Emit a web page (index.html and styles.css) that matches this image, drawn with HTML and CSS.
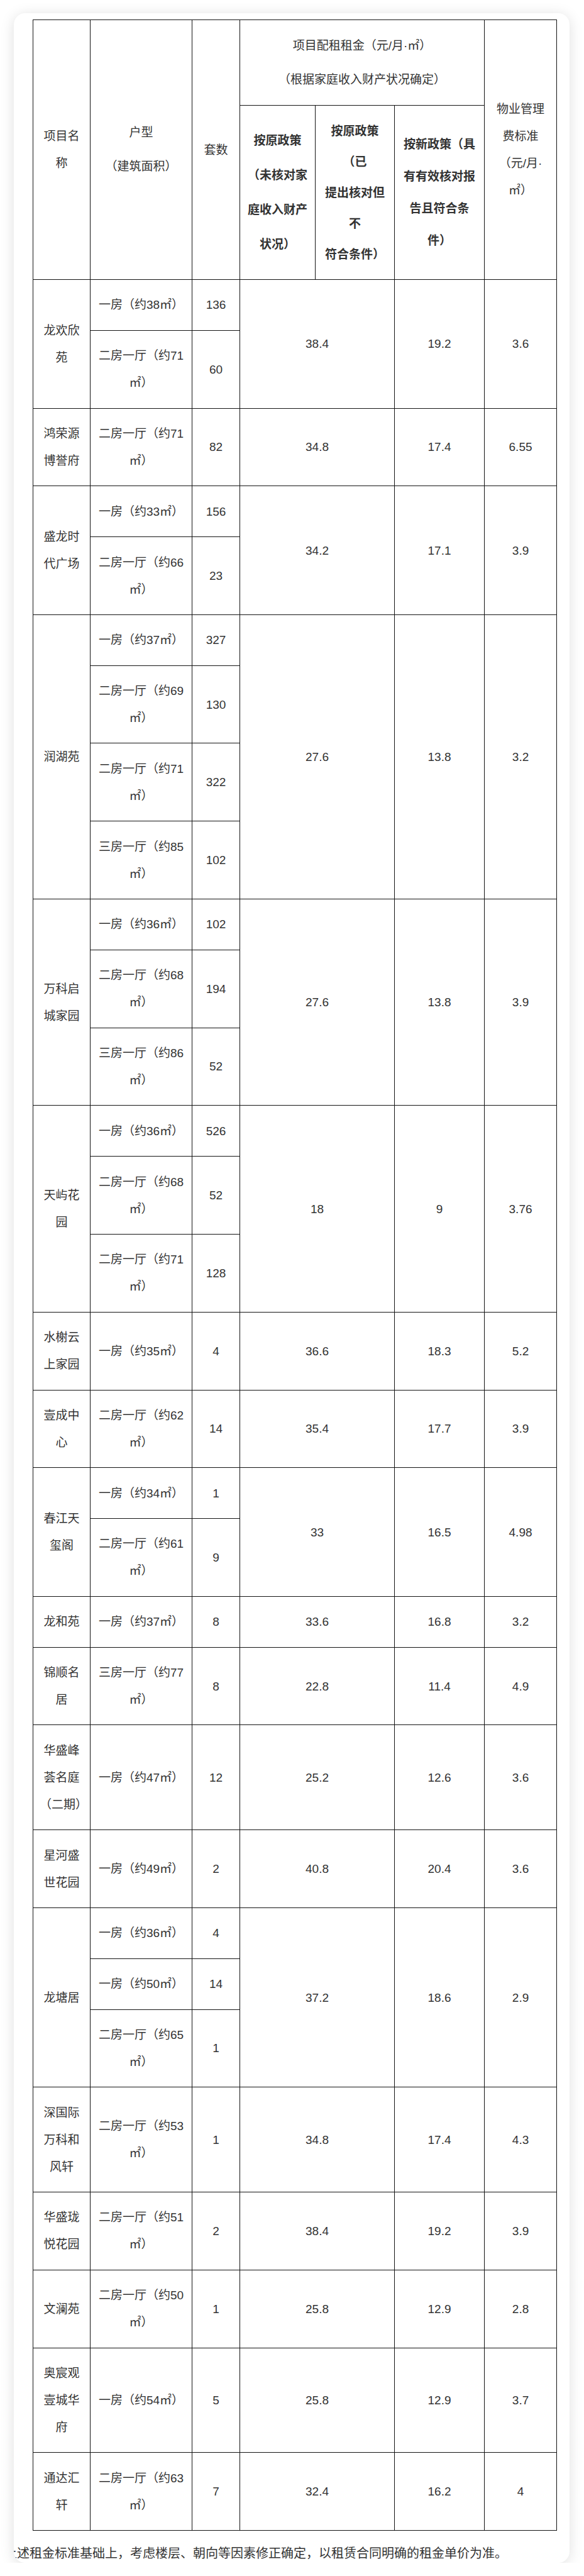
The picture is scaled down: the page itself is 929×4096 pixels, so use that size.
FILE: index.html
```html
<!DOCTYPE html>
<html lang="zh-CN">
<head>
<meta charset="utf-8">
<title>项目配租租金</title>
<link rel="stylesheet" href="styles.css">
</head>
<body>
<div class="card">
<table class="rent">
<colgroup>
<col class="c1"><col class="c2"><col class="c3"><col class="c4"><col class="c5"><col class="c6"><col class="c7">
</colgroup>
<thead>
<tr class="hr1">
<th rowspan="2" class="hname">项目名称</th>
<th rowspan="2" class="htype"><div>户型</div><div>（建筑面积）</div></th>
<th rowspan="2">套数</th>
<th colspan="3" class="hrent"><div>项目配租租金（元/月·㎡）</div><div>（根据家庭收入财产状况确定）</div></th>
<th rowspan="2" class="hfee">物业管理费标准（元/月·㎡）</th>
</tr>
<tr class="hr2">
<th class="pol p4">按原政策（未核对家庭收入财产状况）</th>
<th class="pol p5">按原政策（已<br>提出核对但不<br>符合条件）</th>
<th class="pol p6">按新政策（具有有效核对报告且符合条件）</th>
</tr>
</thead>
<tbody>
<tr><td rowspan="2">龙欢欣苑</td><td>一房（约38㎡）</td><td>136</td><td rowspan="2" colspan="2">38.4</td><td rowspan="2">19.2</td><td rowspan="2">3.6</td></tr>
<tr><td>二房一厅（约71㎡）</td><td>60</td></tr>

<tr><td>鸿荣源博誉府</td><td>二房一厅（约71㎡）</td><td>82</td><td colspan="2">34.8</td><td>17.4</td><td>6.55</td></tr>

<tr><td rowspan="2">盛龙时代广场</td><td>一房（约33㎡）</td><td>156</td><td rowspan="2" colspan="2">34.2</td><td rowspan="2">17.1</td><td rowspan="2">3.9</td></tr>
<tr><td>二房一厅（约66㎡）</td><td>23</td></tr>

<tr><td rowspan="4">润湖苑</td><td>一房（约37㎡）</td><td>327</td><td rowspan="4" colspan="2">27.6</td><td rowspan="4">13.8</td><td rowspan="4">3.2</td></tr>
<tr><td>二房一厅（约69㎡）</td><td>130</td></tr>
<tr><td>二房一厅（约71㎡）</td><td>322</td></tr>
<tr><td>三房一厅（约85㎡）</td><td>102</td></tr>

<tr><td rowspan="3">万科启城家园</td><td>一房（约36㎡）</td><td>102</td><td rowspan="3" colspan="2">27.6</td><td rowspan="3">13.8</td><td rowspan="3">3.9</td></tr>
<tr><td>二房一厅（约68㎡）</td><td>194</td></tr>
<tr><td>三房一厅（约86㎡）</td><td>52</td></tr>

<tr><td rowspan="3">天屿花园</td><td>一房（约36㎡）</td><td>526</td><td rowspan="3" colspan="2">18</td><td rowspan="3">9</td><td rowspan="3">3.76</td></tr>
<tr><td>二房一厅（约68㎡）</td><td>52</td></tr>
<tr><td>二房一厅（约71㎡）</td><td>128</td></tr>

<tr><td>水榭云上家园</td><td>一房（约35㎡）</td><td>4</td><td colspan="2">36.6</td><td>18.3</td><td>5.2</td></tr>

<tr><td>壹成中心</td><td>二房一厅（约62㎡）</td><td>14</td><td colspan="2">35.4</td><td>17.7</td><td>3.9</td></tr>

<tr><td rowspan="2">春江天玺阁</td><td>一房（约34㎡）</td><td>1</td><td rowspan="2" colspan="2">33</td><td rowspan="2">16.5</td><td rowspan="2">4.98</td></tr>
<tr><td>二房一厅（约61㎡）</td><td>9</td></tr>

<tr><td>龙和苑</td><td>一房（约37㎡）</td><td>8</td><td colspan="2">33.6</td><td>16.8</td><td>3.2</td></tr>

<tr><td>锦顺名居</td><td>三房一厅（约77㎡）</td><td>8</td><td colspan="2">22.8</td><td>11.4</td><td>4.9</td></tr>

<tr><td>华盛峰荟名庭<span class="nw">（二期）</span></td><td>一房（约47㎡）</td><td>12</td><td colspan="2">25.2</td><td>12.6</td><td>3.6</td></tr>

<tr><td>星河盛世花园</td><td>一房（约49㎡）</td><td>2</td><td colspan="2">40.8</td><td>20.4</td><td>3.6</td></tr>

<tr><td rowspan="3">龙塘居</td><td>一房（约36㎡）</td><td>4</td><td rowspan="3" colspan="2">37.2</td><td rowspan="3">18.6</td><td rowspan="3">2.9</td></tr>
<tr><td>一房（约50㎡）</td><td>14</td></tr>
<tr><td>二房一厅（约65㎡）</td><td>1</td></tr>

<tr><td>深国际万科和风轩</td><td>二房一厅（约53㎡）</td><td>1</td><td colspan="2">34.8</td><td>17.4</td><td>4.3</td></tr>

<tr><td>华盛珑悦花园</td><td>二房一厅（约51㎡）</td><td>2</td><td colspan="2">38.4</td><td>19.2</td><td>3.9</td></tr>

<tr><td>文澜苑</td><td>二房一厅（约50㎡）</td><td>1</td><td colspan="2">25.8</td><td>12.9</td><td>2.8</td></tr>

<tr><td>奥宸观壹城华府</td><td>一房（约54㎡）</td><td>5</td><td colspan="2">25.8</td><td>12.9</td><td>3.7</td></tr>

<tr><td>通达汇轩</td><td>二房一厅（约63㎡）</td><td>7</td><td colspan="2">32.4</td><td>16.2</td><td>4</td></tr>
</tbody>
</table>
<p class="note">上述租金标准基础上，考虑楼层、朝向等因素修正确定，以租赁合同明确的租金单价为准。</p>
</div>
</body>
</html>
```

FILE: styles.css
```css
html, body {
  margin: 0;
  padding: 0;
  background: #ffffff;
}

body {
  font-family: "Liberation Sans", "Noto Sans CJK SC", sans-serif;
  color: #333333;
}

.card {
  margin: 21px 23px 0 22px;
  padding: 10px 21px 0 30px;
  background: #ffffff;
  border-radius: 18px;
  box-shadow: 0 3px 22px rgba(0, 0, 0, 0.13);
  overflow: hidden;
}

.rent {
  border-collapse: collapse;
  table-layout: fixed;
  width: 833px;
  font-size: 19px;
}

.c1 { width: 91px; }
.c2 { width: 162px; }
.c3 { width: 76px; }
.c4 { width: 120px; }
.c5 { width: 126px; }
.c6 { width: 143px; }
.c7 { width: 115px; }

.rent th,
.rent td {
  border: 1px solid #141414;
  text-align: center;
  vertical-align: middle;
  padding: 18.4px 10px;
  line-height: 43px;
  font-weight: normal;
  color: #333333;
}

.rent th {
  padding: 10px 8px;
}

.hr1 { height: 136px; }
.hr2 { height: 277px; }

.rent .htype { line-height: 54px; }
.rent .hrent { line-height: 54px; }
.rent .hfee { padding: 10px 12px; line-height: 43px; }

.rent .pol { font-weight: bold; }
.rent .p4 { line-height: 55px; }
.rent .p5 { line-height: 49px; }
.rent .p6 { line-height: 51px; padding: 10px 12px; }

.nw { white-space: nowrap; }

.note {
  margin: 21px 0 0 -45px;
  white-space: nowrap;
  font-size: 20px;
  line-height: 30px;
  color: #333333;
}
```
